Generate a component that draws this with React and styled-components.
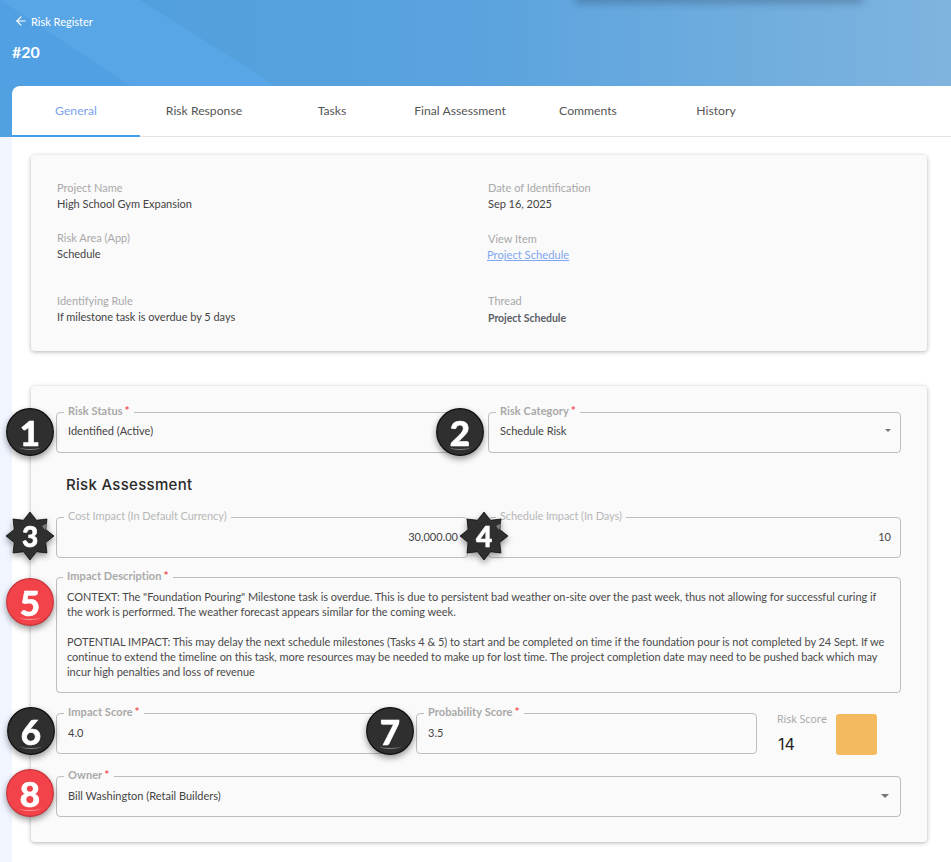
import React from 'react';
import styled, { createGlobalStyle } from 'styled-components';
import { ArrowLeft } from 'lucide-react';

const GlobalStyle = createGlobalStyle`
  * { box-sizing: border-box; }
  html, body { margin: 0; padding: 0; background: #f0f5ff; }
  body { font-family: Lato, "Noto Sans", sans-serif; color: #444; }
`;

const TABS = ['General', 'Risk Response', 'Tasks', 'Final Assessment', 'Comments', 'History'];

const CONTEXT_LINES = [
  'CONTEXT: The "Foundation Pouring" Milestone task is overdue. This is due to persistent bad weather on-site over the past week, thus not allowing for successful curing if',
  'the work is performed. The weather forecast appears similar for the coming week.',
];

const IMPACT_LINES = [
  'POTENTIAL IMPACT: This may delay the next schedule milestones (Tasks 4 & 5) to start and be completed on time if the foundation pour is not completed by 24 Sept. If we',
  'continue to extend the timeline on this task, more resources may be needed to make up for lost time. The project completion date may need to be pushed back which may',
  'incur high penalties and loss of revenue',
];

const BADGES = [
  { n: 1, x: 30, y: 432, kind: 'circle', tone: 'dark' },
  { n: 2, x: 460, y: 432, kind: 'circle', tone: 'dark' },
  { n: 3, x: 30, y: 536, kind: 'star', tone: 'dark' },
  { n: 4, x: 484, y: 536, kind: 'star', tone: 'dark' },
  { n: 5, x: 30, y: 602, kind: 'circle', tone: 'red' },
  { n: 6, x: 31, y: 731, kind: 'circle', tone: 'dark' },
  { n: 7, x: 390, y: 731, kind: 'circle', tone: 'dark' },
  { n: 8, x: 30, y: 793, kind: 'circle', tone: 'red' },
];

const starPoints = () => {
  const pts = [];
  for (let i = 0; i < 16; i++) {
    const r = i % 2 === 0 ? 24 : 17;
    const a = (Math.PI / 8) * i - Math.PI / 2;
    pts.push(`${(24 + r * Math.cos(a)).toFixed(2)},${(24 + r * Math.sin(a)).toFixed(2)}`);
  }
  return pts.join(' ');
};

const NumberBadge = ({ n, x, y, kind, tone }) => {
  const fill = tone === 'red' ? '#f2424a' : '#2f2f2f';
  const edge = tone === 'red' ? '#c9343a' : '#0e0e0e';
  const shine = tone === 'red' ? '#ff9a9e' : '#8a8a8a';
  return (
    <Badge $x={x} $y={y}>
      <svg width="48" height="48" viewBox="0 0 48 48">
        {kind === 'star' ? (
          <>
            <polygon points={starPoints()} fill={fill} stroke={edge} strokeWidth="0.8" strokeLinejoin="round" />
            <polygon points="36,14 41,11.5 39,18" fill="#7d7d7d" />
          </>
        ) : (
          <>
            <circle cx="24" cy="24" r="23.3" fill={fill} stroke={edge} strokeWidth="1.2" />
            <path d="M12 39.5 Q24 44.5 36 39.5 Q24 42.5 12 39.5 Z" fill={shine} />
          </>
        )}
      </svg>
      <BadgeDigit $small={kind === 'star'}>{n}</BadgeDigit>
    </Badge>
  );
};

const Field = ({ label, required, muted, align, caret, tight, children }) => (
  <FieldBox>
    <FieldLegend $muted={muted}>
      {label}
      {required && <Star>*</Star>}
    </FieldLegend>
    <FieldBody $align={align} $tight={tight}>
      <span>{children}</span>
      {caret && <Caret $size={caret} />}
    </FieldBody>
  </FieldBox>
);

const App = () => (
  <Page>
    <GlobalStyle />
    <Hero>
      <HeroArt width="951" height="86" viewBox="0 0 951 86">
        <polygon points="0,0 140,0 276,86 130,86" fill="#58a6e6" />
        <polygon points="0,0 130,86 0,86" fill="#51a0e3" />
      </HeroArt>
      <TopShadow />
      <BackLink>
        <ArrowLeft size={14} strokeWidth={2} />
        Risk Register
      </BackLink>
      <Title>#20</Title>
    </Hero>
    <Content>
      <Panel>
        <TabBar>
          {TABS.map((t, i) => (
            <Tab key={t} $active={i === 0}>{t}</Tab>
          ))}
        </TabBar>

        <InfoCard>
          <Info>
            <InfoLabel>Project Name</InfoLabel>
            <InfoValue>High School Gym Expansion</InfoValue>
          </Info>
          <Info>
            <InfoLabel>Date of Identification</InfoLabel>
            <InfoValue>Sep 16, 2025</InfoValue>
          </Info>
          <Info>
            <InfoLabel>Risk Area (App)</InfoLabel>
            <InfoValue>Schedule</InfoValue>
          </Info>
          <Info $drop>
            <InfoLabel>View Item</InfoLabel>
            <InfoLink>Project Schedule</InfoLink>
          </Info>
          <Info>
            <InfoLabel>Identifying Rule</InfoLabel>
            <InfoValue>If milestone task is overdue by 5 days</InfoValue>
          </Info>
          <Info>
            <InfoLabel>Thread</InfoLabel>
            <InfoValue $strong>Project Schedule</InfoValue>
          </Info>
        </InfoCard>

        <FormCard>
          <TwoCols>
            <Field label="Risk Status" required tight>Identified (Active)</Field>
            <Field label="Risk Category" required tight caret="small">Schedule Risk</Field>
          </TwoCols>
          <SectionTitle>Risk Assessment</SectionTitle>
          <TwoCols>
            <Field label="Cost Impact (In Default Currency)" muted align="right">30,000.00</Field>
            <Field label="Schedule Impact (In Days)" muted align="right">10</Field>
          </TwoCols>
          <Gap $h={12} />
          <DescBox>
            <FieldLegend>
              Impact Description<Star>*</Star>
            </FieldLegend>
            {CONTEXT_LINES.map(l => <DescLine key={l}>{l}</DescLine>)}
            <DescBreak />
            {IMPACT_LINES.map(l => <DescLine key={l}>{l}</DescLine>)}
          </DescBox>
          <Gap $h={13} />
          <ScoreRow>
            <Field label="Impact Score" required>4.0</Field>
            <Field label="Probability Score" required>3.5</Field>
            <RiskScore>
              <div>
                <RiskLabel>Risk Score</RiskLabel>
                <RiskNumber>14</RiskNumber>
              </div>
              <Swatch />
            </RiskScore>
          </ScoreRow>
          <Gap $h={14} />
          <Field label="Owner" required caret="large">Bill Washington (Retail Builders)</Field>
          {BADGES.map(b => <NumberBadge key={b.n} {...b} />)}
        </FormCard>
      </Panel>
    </Content>
  </Page>
);

const Page = styled.div`
  width: 951px;
  height: 862px;
  overflow: hidden;
`;

const Hero = styled.header`
  position: relative;
  height: 86px;
  padding: 14px 12px 0;
  overflow: hidden;
  color: #fff;
  background: linear-gradient(90deg, #4f9edd 0%, #5aa3de 50%, #7fb4de 100%);
`;

const HeroArt = styled.svg`
  position: absolute;
  left: 0;
  top: 0;
`;

const TopShadow = styled.div`
  position: absolute;
  left: 578px;
  top: -12px;
  width: 282px;
  height: 12px;
  box-shadow: 0 0 8px 3px rgba(30, 50, 80, 0.32);
`;

const BackLink = styled.div`
  position: relative;
  display: flex;
  align-items: center;
  gap: 3px;
  height: 14px;
  padding-left: 2px;
  font-size: 11px;
`;

const Title = styled.h1`
  position: relative;
  margin: 15px 0 0;
  font-size: 16px;
  line-height: 18px;
  font-weight: 700;
`;

const Content = styled.div`
  padding-left: 12px;
  background: linear-gradient(#50a0e2 51px, #f0f5ff 51px);
`;

const Panel = styled.main`
  height: 776px;
  background: #fff;
  border-top-left-radius: 8px;
`;

const TabBar = styled.nav`
  display: flex;
  height: 51px;
  border-bottom: 1px solid #e2e2e2;
`;

const Tab = styled.div`
  width: 128px;
  height: 51px;
  line-height: 50px;
  text-align: center;
  font-size: 12.2px;
  color: ${p => (p.$active ? '#7a9ff0' : '#555')};
  border-bottom: ${p => (p.$active ? '2px solid #42a0ef' : 'none')};
`;

const InfoCard = styled.section`
  display: grid;
  grid-template-columns: 431px 1fr;
  grid-template-rows: 50px 63px auto;
  width: 896px;
  height: 196px;
  margin: 18px 0 0 19px;
  padding: 25px 26px 0;
  background: #fafafa;
  border-radius: 4px;
  box-shadow: 0 1px 4px rgba(0, 0, 0, 0.3);
`;

const Info = styled.div`
  padding-top: ${p => (p.$drop ? '1px' : '0')};
`;

const InfoLabel = styled.div`
  font-size: 11px;
  line-height: 16px;
  color: #a9a9a9;
`;

const InfoValue = styled.div`
  font-size: ${p => (p.$strong ? '10.5px' : '11px')};
  line-height: 16px;
  letter-spacing: -0.03px;
  color: ${p => (p.$strong ? '#5a5f66' : '#444')};
  font-weight: ${p => (p.$strong ? 700 : 400)};
  padding-top: ${p => (p.$strong ? '1px' : '0')};
`;

const InfoLink = styled.a`
  display: block;
  margin-left: -1px;
  font-size: 11.2px;
  line-height: 16px;
  color: #7fa6f0;
  text-decoration: underline;
`;

const FormCard = styled.section`
  position: relative;
  width: 896px;
  height: 456px;
  margin: 35px 0 0 19px;
  padding: 19px 26px 0 25px;
  background: #fafafa;
  border-radius: 4px;
  box-shadow: 0 1px 4px rgba(0, 0, 0, 0.3);
`;

const TwoCols = styled.div`
  display: grid;
  grid-template-columns: 412px 413px;
  gap: 20px;
`;

const ScoreRow = styled.div`
  display: grid;
  grid-template-columns: 340px 341px 124px;
  gap: 20px;
`;

const Gap = styled.div`
  height: ${p => p.$h}px;
`;

const FieldBox = styled.fieldset`
  display: block;
  min-width: 0;
  height: 48px;
  margin: 0;
  padding: 0 9px 0 11px;
  border: 1px solid #bdbdbd;
  border-radius: 4px;
`;

const FieldLegend = styled.legend`
  margin-left: -4px;
  padding: 0 4px 2px;
  font-size: 11px;
  line-height: 12px;
  letter-spacing: ${p => (p.$muted ? '-0.08px' : '0.08px')};
  font-weight: ${p => (p.$muted ? 400 : 700)};
  color: ${p => (p.$muted ? '#b8b8b8' : '#a9a9a9')};
`;

const Star = styled.span`
  margin-left: 2px;
  font-size: 12px;
  color: #f0525a;
`;

const FieldBody = styled.div`
  display: flex;
  align-items: center;
  justify-content: ${p => (p.$align === 'right' ? 'flex-end' : 'space-between')};
  height: ${p => (p.$tight ? '36px' : '39px')};
  margin-top: -7px;
  font-size: 11px;
  color: #444;
`;

const Caret = styled.i`
  width: 0;
  height: 0;
  margin-right: ${p => (p.$size === 'large' ? '2px' : '0')};
  border-left: ${p => (p.$size === 'large' ? '4px' : '3px')} solid transparent;
  border-right: ${p => (p.$size === 'large' ? '4px' : '3px')} solid transparent;
  border-top: ${p => (p.$size === 'large' ? '4px' : '3px')} solid #757575;
`;

const SectionTitle = styled.h2`
  height: 57px;
  margin: 0;
  padding: 22px 0 0 10px;
  font-family: Inter, sans-serif;
  font-size: 15px;
  line-height: 20px;
  letter-spacing: 0.3px;
  font-weight: 500;
  color: #2a2a2a;
`;

const DescBox = styled.fieldset`
  display: block;
  min-width: 0;
  height: 123px;
  margin: 0;
  padding: 5px 10px 0 10px;
  border: 1px solid #bdbdbd;
  border-radius: 4px;
`;

const DescLine = styled.div`
  font-size: 11px;
  line-height: 15px;
  letter-spacing: -0.045px;
  white-space: nowrap;
  color: #4a4a4a;
`;

const DescBreak = styled.div`
  height: 15px;
`;

const RiskScore = styled.div`
  display: flex;
  gap: 9px;
  padding-top: 6px;
`;

const RiskLabel = styled.div`
  font-family: "Noto Sans", sans-serif;
  font-size: 10.5px;
  line-height: 14px;
  color: #a9a9a9;
`;

const RiskNumber = styled.div`
  margin-top: 9px;
  padding-left: 1px;
  font-family: Inter, sans-serif;
  font-size: 16px;
  line-height: 18px;
  color: #222;
`;

const Swatch = styled.div`
  width: 41px;
  height: 41px;
  margin-top: 2px;
  background: #f4ba5f;
  border-radius: 3px;
`;

const Badge = styled.div`
  position: absolute;
  left: ${p => p.$x - 31 - 24}px;
  top: ${p => p.$y - 386 - 24}px;
  width: 48px;
  height: 48px;
  filter: drop-shadow(0 3px 3px rgba(0, 0, 0, 0.4));
  svg { display: block; overflow: visible; }
`;

const BadgeDigit = styled.span`
  position: absolute;
  inset: 0;
  display: flex;
  align-items: center;
  justify-content: center;
  font-family: Lato, sans-serif;
  font-weight: 900;
  font-size: ${p => (p.$small ? '28px' : '35px')};
  color: #fff;
  -webkit-text-stroke: 0.6px #fff;
`;

export default App;
